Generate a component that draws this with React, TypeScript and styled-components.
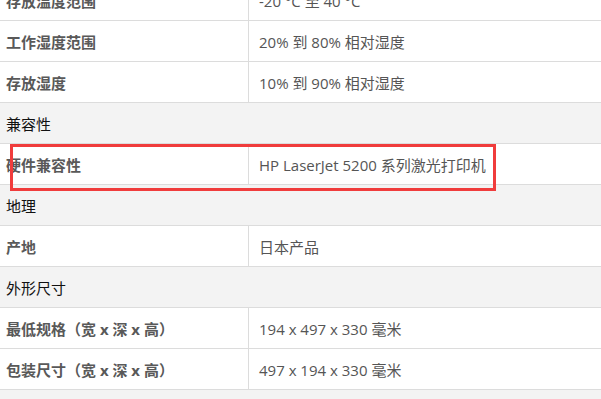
import React from "react";
import styled, { createGlobalStyle } from "styled-components";

const GlobalStyle = createGlobalStyle`
  html, body {
    margin: 0;
    padding: 0;
    background: #f3f3f3;
    overflow: hidden;
  }
  body {
    font-family: "Open Sans", "Noto Sans CJK SC", sans-serif;
  }
`;

type Row =
  | { kind: "section"; title: string }
  | { kind: "spec"; label: string; value: string; marked?: boolean };

const rows: Row[] = [
  { kind: "spec", label: "存放温度范围", value: "-20 °C 至 40 °C" },
  { kind: "spec", label: "工作湿度范围", value: "20% 到 80% 相对湿度" },
  { kind: "spec", label: "存放湿度", value: "10% 到 90% 相对湿度" },
  { kind: "section", title: "兼容性" },
  { kind: "spec", label: "硬件兼容性", value: "HP LaserJet 5200 系列激光打印机", marked: true },
  { kind: "section", title: "地理" },
  { kind: "spec", label: "产地", value: "日本产品" },
  { kind: "section", title: "外形尺寸" },
  { kind: "spec", label: "最低规格（宽 x 深 x 高）", value: "194 x 497 x 330 毫米" },
  { kind: "spec", label: "包装尺寸（宽 x 深 x 高）", value: "497 x 194 x 330 毫米" },
];

const Page = styled.div`
  width: 601px;
  height: 399px;
  overflow: hidden;
  background: #f3f3f3;
`;

// first row is scrolled partly out of view
const SpecTable = styled.div`
  margin-top: -20px;
  display: flex;
  flex-direction: column;
`;

const SpecRow = styled.div`
  position: relative;
  display: grid;
  grid-template-columns: 249px 1fr;
  height: 40px;
  background: #ffffff;
  border-bottom: 1px solid #dcdcdc;
`;

const SectionRow = styled.div`
  height: 40px;
  display: flex;
  align-items: center;
  padding-left: 6px;
  background: #f3f3f3;
  border-bottom: 1px solid #dcdcdc;
  color: #111111;
  font-size: 15px;
`;

const Label = styled.div`
  display: flex;
  align-items: center;
  padding-left: 6px;
  border-right: 1px solid #dcdcdc;
  color: #595959;
  font-size: 15px;
  font-weight: 700;
  white-space: nowrap;
`;

const Value = styled.div`
  display: flex;
  align-items: center;
  padding-left: 10px;
  color: #555555;
  font-size: 15px;
  white-space: nowrap;
`;

const Highlight = styled.div`
  position: absolute;
  left: 10px;
  top: 0;
  width: 480px;
  height: 41px;
  border: 3px solid #f03c3c;
  pointer-events: none;
`;

export default function App() {
  return (
    <Page>
      <GlobalStyle />
      <SpecTable>
        {rows.map((row, i) =>
          row.kind === "section" ? (
            <SectionRow key={i}>{row.title}</SectionRow>
          ) : (
            <SpecRow key={i}>
              <Label>{row.label}</Label>
              <Value>{row.value}</Value>
              {row.marked && <Highlight />}
            </SpecRow>
          )
        )}
      </SpecTable>
    </Page>
  );
}
